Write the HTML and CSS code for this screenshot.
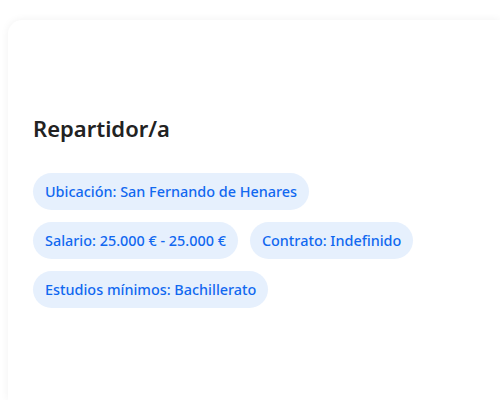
FILE: index.html
```html
<!DOCTYPE html>
<html lang="es">
<head>
  <meta charset="UTF-8" />
  <title>Repartidor/a</title>
  <link rel="stylesheet" href="styles.css">
</head>
<body>

  <div class="job-card">
    <h2 class="job-title">Repartidor/a</h2>
    <div class="job-tags">
      <span class="tag">Ubicación: San Fernando de Henares</span>
      <span class="tag">Salario: 25.000 € - 25.000 €</span>
      <span class="tag">Contrato: Indefinido</span>
      <span class="tag">Estudios mínimos: Bachillerato</span>
    </div>
  </div>

</body>
</html>
```

FILE: styles.css
```css
html, body {
  height: 100%;
}

body {
  font-family: 'Noto Sans', 'Open Sans', sans-serif;
  background: #fff;
  margin: 0;
  padding: 20px 0 0 8px;
  box-sizing: border-box;
  color: #1a1a1a;
  overflow: hidden;
}

/* card runs past the right and bottom edge in the shot */
.job-card {
  background: #fff;
  border-radius: 14px 0 0 0;
  box-shadow: 0 0 8px rgba(0,0,0,0.06);
  padding: 93px 25px 0;
  height: 100%;
  box-sizing: border-box;
}

.job-title {
  font-size: 22px;
  font-weight: 600;
  margin: 0 0 30px;
  color: #222;
}

.job-tags {
  display: flex;
  flex-wrap: wrap;
  gap: 12px;
  width: 400px;
}

.tag {
  background: #e6f0fd;
  color: #1168f0;
  font-size: 14.4px;
  font-weight: 500;
  padding: 9px 12px;
  border-radius: 20px;
  line-height: 19px;
}
```
